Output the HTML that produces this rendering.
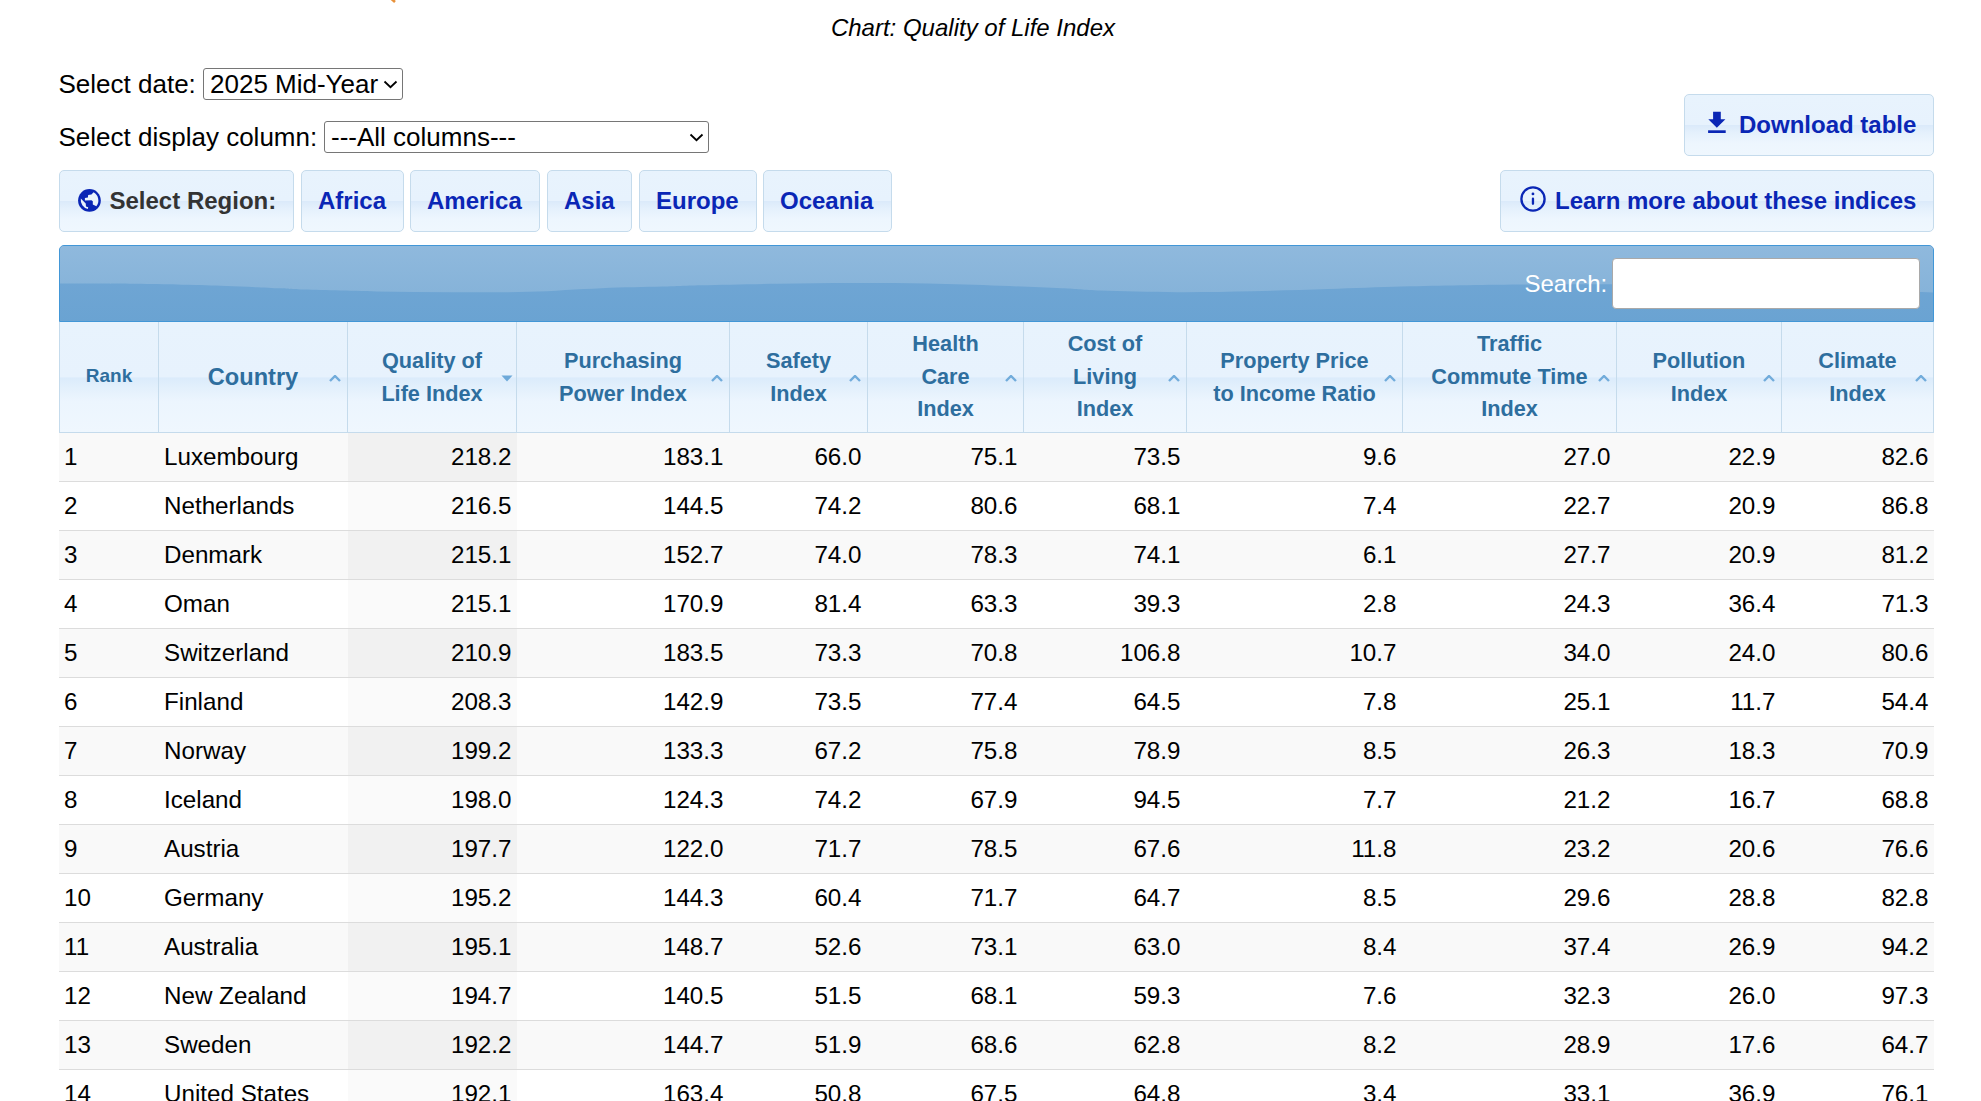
<!DOCTYPE html>
<html><head><meta charset="utf-8"><title>Quality of Life Index</title>
<style>
html,body{margin:0;padding:0;background:#fff;}
body{width:1981px;height:1101px;overflow:hidden;position:relative;font-family:"Liberation Sans",sans-serif;color:#000;}
.abs{position:absolute;white-space:nowrap;}
#title{left:0;width:1946px;top:10px;text-align:center;font-size:24px;font-style:italic;line-height:36px;}
.lbl{font-size:26px;line-height:32px;}
.sel{position:absolute;box-sizing:border-box;border:1px solid #767676;border-radius:3px;background:#fff;font-size:26px;line-height:30px;padding-left:6px;white-space:nowrap;}
.sel svg{position:absolute;top:11px;}
.glass{background:linear-gradient(to bottom,#e8f3fd 0%,#e7f2fd 49.5%,#dbeafa 50.5%,#e4f0fc 62%,#edf6fe 80%,#eff7fe 100%);}
.btn{position:absolute;box-sizing:border-box;border:1px solid #c5dbec;border-radius:5px;height:61.5px;font-weight:bold;font-size:24px;color:#0a26b5;line-height:59px;white-space:nowrap;}
.btn .t{position:absolute;top:0;}
#bar{position:absolute;left:59px;top:245px;width:1875px;height:77px;box-sizing:border-box;border:1px solid #4297d7;border-bottom:1px solid #4297d7;border-radius:5px 5px 0 0;overflow:hidden;background:#76aad6;}
#bar svg.wave{position:absolute;left:0;top:0;}
#search{position:absolute;left:1464.5px;top:23px;color:#fff;font-size:24px;line-height:30px;}
#sinput{position:absolute;left:1551.8px;top:12px;width:308px;height:50.5px;box-sizing:border-box;background:#fff;border:1px solid #a9a9a9;border-radius:4px;}
.th{position:absolute;top:322px;height:111px;box-sizing:border-box;border-left:1px solid #c5dbec;border-bottom:1px solid #c5dbec;font-weight:bold;color:#2e6e9e;font-size:21.7px;line-height:32.5px;text-align:center;background:linear-gradient(to bottom,#e8f3fd 0%,#e7f2fd 50%,#dbebfb 50.8%,#e3f0fc 60%,#ecf5fe 72%,#eff7fe 100%);}
.th:last-child{border-right:1px solid #c5dbec;}
.th .tt{position:absolute;left:0;right:0;top:50%;transform:translateY(-50%);}
.th.rank .tt{font-size:19px;margin-top:-1px;}
.th.country .tt{font-size:23.6px;}
.th .si{position:absolute;right:6px;top:53.3px;}
.tr{position:absolute;left:59px;width:1875px;height:49px;border-bottom:1px solid #dcdcdc;box-sizing:border-box;font-size:24.2px;}
.tr.odd{background:#f9f9f9;}
.tr.even{background:#fff;}
.td{position:absolute;top:0;height:48px;line-height:47px;white-space:nowrap;box-sizing:border-box;padding-left:6px;}
.td.rk{padding-left:5px;}
.td.num{text-align:right;padding-right:5.5px;padding-left:0;}
.tr.odd .td.sort{background:#f1f1f1;}
.tr.even .td.sort{background:#fafafa;}

</style></head><body>
<div class="abs" style="left:388px;top:0px;width:10px;height:5px;"><svg style="display:block" width="10" height="5"><path d="M3 -1.5 L7 2" stroke="#e8913a" stroke-width="2.6"/></svg></div>
<div id="title" class="abs">Chart: Quality of Life Index</div>
<div class="abs lbl" style="left:58.5px;top:68px;">Select date:</div>
<div class="sel" style="left:203px;top:68px;width:200px;height:31.5px;">2025 Mid-Year<svg style="left:179px" width="15" height="9" viewBox="0 0 15 9"><path d="M1.5 1.5 L7.5 7.2 L13.5 1.5" fill="none" stroke="#000" stroke-width="1.8"/></svg></div>
<div class="abs lbl" style="left:58.5px;top:121px;">Select display column:</div>
<div class="sel" style="left:324px;top:121px;width:385px;height:31.5px;">---All columns---<svg style="left:364px" width="15" height="9" viewBox="0 0 15 9"><path d="M1.5 1.5 L7.5 7.2 L13.5 1.5" fill="none" stroke="#000" stroke-width="1.8"/></svg></div>

<div class="btn glass" style="left:1684px;top:94px;width:250px;">
 <svg style="position:absolute;left:15px;top:10px" width="35" height="35" viewBox="0 0 35 35"><path d="M13.1 6.7 H20.8 V14.3 H25.4 L16.85 22.7 L8.3 14.3 H13.1 Z" fill="#0a26b5"/><rect x="8.1" y="25.3" width="17.6" height="2.7" fill="#0a26b5"/></svg>
 <span class="t" style="left:54px">Download table</span></div>

<div class="btn glass" style="left:59px;top:170px;width:235px;color:#333;">
 <svg style="position:absolute;left:14px;top:14px" width="30" height="30" viewBox="0 0 1101 1101"><circle cx="567" cy="567" r="417" fill="#0a26b5"/><path d="M720 270 L640 350 L520 370 L510 460 L400 480 L400 570 L640 560 L690 600 L690 720 L820 780 A342 342 0 0 0 720 270 Z M250 500 L430 680 L440 790 L520 820 L510 880 A342 342 0 0 1 250 500 Z" fill="#e9f3fc"/></svg>
 <span class="t" style="left:49.5px">Select Region:</span></div>
<div class="btn glass" style="left:301px;top:170px;width:103px;"><span class="t" style="left:16px">Africa</span></div>
<div class="btn glass" style="left:410px;top:170px;width:130px;"><span class="t" style="left:16px">America</span></div>
<div class="btn glass" style="left:547px;top:170px;width:85px;"><span class="t" style="left:16px">Asia</span></div>
<div class="btn glass" style="left:639px;top:170px;width:118px;"><span class="t" style="left:16px">Europe</span></div>
<div class="btn glass" style="left:763px;top:170px;width:129px;"><span class="t" style="left:16px">Oceania</span></div>

<div class="btn glass" style="left:1500px;top:170px;width:434px;">
 <svg style="position:absolute;left:14px;top:11px" width="35" height="35" viewBox="0 0 35 35"><circle cx="18" cy="17" r="11.6" fill="none" stroke="#0a26b5" stroke-width="2.3"/><circle cx="17.96" cy="11.9" r="1.4" fill="#0a26b5"/><path d="M17.96 16.7 V21.8" stroke="#0a26b5" stroke-width="2.3" stroke-linecap="round"/></svg>
 <span class="t" style="left:54px">Learn more about these indices</span></div>

<div id="bar">
 <svg class="wave" width="1875" height="77" viewBox="0 0 1875 77" preserveAspectRatio="none">
  <defs>
   <linearGradient id="gt" x1="0" y1="0" x2="0" y2="1"><stop offset="0" stop-color="#8fb9dd"/><stop offset="1" stop-color="#86b3d9"/></linearGradient>
   <linearGradient id="gb" x1="0" y1="0" x2="0" y2="1"><stop offset="0" stop-color="#73a7d5"/><stop offset="1" stop-color="#6aa3d2"/></linearGradient>
  </defs>
  <rect x="0" y="0" width="1875" height="77" fill="url(#gb)"/>
  <path id="wv" d="M0 0 H1875 V46.50 C1852.7 45.83 1780.0 43.67 1741.0 42.50 C1702.0 41.33 1674.3 40.20 1641.0 39.50 C1607.7 38.80 1571.0 38.47 1541.0 38.30 C1511.0 38.13 1484.5 38.33 1461.0 38.50 C1437.5 38.67 1420.0 38.95 1400.0 39.30 C1380.0 39.65 1363.0 39.97 1341.0 40.60 C1319.0 41.23 1292.8 42.32 1268.0 43.10 C1243.2 43.88 1217.2 44.78 1192.0 45.30 C1166.8 45.82 1142.2 46.32 1117.0 46.20 C1091.8 46.08 1060.2 45.25 1041.0 44.60 C1021.8 43.95 1018.7 43.10 1002.0 42.30 C985.3 41.50 963.3 40.58 941.0 39.80 C918.7 39.02 892.8 38.05 868.0 37.60 C843.2 37.15 817.2 37.07 792.0 37.10 C766.8 37.13 742.2 37.43 717.0 37.80 C691.8 38.17 660.2 38.83 641.0 39.30 C621.8 39.77 618.7 40.12 602.0 40.60 C585.3 41.08 563.3 41.33 541.0 42.20 C518.7 43.07 492.7 45.13 468.0 45.80 C443.3 46.47 418.2 46.27 393.0 46.20 C367.8 46.13 342.3 45.85 317.0 45.40 C291.7 44.95 257.2 44.02 241.0 43.50 C224.8 42.98 232.3 42.87 220.0 42.30 C207.7 41.73 183.3 40.68 167.0 40.10 C150.7 39.52 143.0 39.22 122.0 38.80 C101.0 38.38 61.3 37.82 41.0 37.60 C20.7 37.38 6.8 37.52 0.0 37.50 V0 Z" fill="url(#gt)"/>
 </svg>
 <div id="search">Search:</div>
 <div id="sinput"></div>
</div>

<div id="thead"><div class="th rank" style="left:59.0px;width:99.0px"><div class="tt">Rank</div></div><div class="th country" style="left:158.0px;width:189.0px"><div class="tt">Country</div><svg class="si" width="12" height="7" viewBox="0 0 12 7"><path d="M1 6 L6 1 L11 6" fill="none" stroke="#72acdb" stroke-width="2.4"/></svg></div><div class="th" style="left:347.0px;width:169.0px"><div class="tt">Quality of<br>Life Index</div><svg class="si" style="right:3.5px" width="12" height="7" viewBox="0 0 12 7"><path d="M0.5 0.5 L11.5 0.5 L6 6.5 Z" fill="#6ea9d9"/></svg></div><div class="th" style="left:516.0px;width:213.0px"><div class="tt">Purchasing<br>Power Index</div><svg class="si" width="12" height="7" viewBox="0 0 12 7"><path d="M1 6 L6 1 L11 6" fill="none" stroke="#72acdb" stroke-width="2.4"/></svg></div><div class="th" style="left:729.0px;width:138.0px"><div class="tt">Safety<br>Index</div><svg class="si" width="12" height="7" viewBox="0 0 12 7"><path d="M1 6 L6 1 L11 6" fill="none" stroke="#72acdb" stroke-width="2.4"/></svg></div><div class="th" style="left:867.0px;width:156.0px"><div class="tt">Health<br>Care<br>Index</div><svg class="si" width="12" height="7" viewBox="0 0 12 7"><path d="M1 6 L6 1 L11 6" fill="none" stroke="#72acdb" stroke-width="2.4"/></svg></div><div class="th" style="left:1023.0px;width:163.0px"><div class="tt">Cost of<br>Living<br>Index</div><svg class="si" width="12" height="7" viewBox="0 0 12 7"><path d="M1 6 L6 1 L11 6" fill="none" stroke="#72acdb" stroke-width="2.4"/></svg></div><div class="th" style="left:1186.0px;width:216.0px"><div class="tt">Property Price<br>to Income Ratio</div><svg class="si" width="12" height="7" viewBox="0 0 12 7"><path d="M1 6 L6 1 L11 6" fill="none" stroke="#72acdb" stroke-width="2.4"/></svg></div><div class="th" style="left:1402.0px;width:214.0px"><div class="tt">Traffic<br>Commute Time<br>Index</div><svg class="si" width="12" height="7" viewBox="0 0 12 7"><path d="M1 6 L6 1 L11 6" fill="none" stroke="#72acdb" stroke-width="2.4"/></svg></div><div class="th" style="left:1616.0px;width:165.0px"><div class="tt">Pollution<br>Index</div><svg class="si" width="12" height="7" viewBox="0 0 12 7"><path d="M1 6 L6 1 L11 6" fill="none" stroke="#72acdb" stroke-width="2.4"/></svg></div><div class="th" style="left:1781.0px;width:153.0px"><div class="tt">Climate<br>Index</div><svg class="si" width="12" height="7" viewBox="0 0 12 7"><path d="M1 6 L6 1 L11 6" fill="none" stroke="#72acdb" stroke-width="2.4"/></svg></div></div>
<div id="tbody"><div class="tr odd" style="top:433.00px"><div class="td rk" style="left:0.0px;width:99.0px">1</div><div class="td" style="left:99.0px;width:189.0px">Luxembourg</div><div class="td num sort" style="left:289.0px;width:169.0px">218.2</div><div class="td num" style="left:457.0px;width:213.0px">183.1</div><div class="td num" style="left:670.0px;width:138.0px">66.0</div><div class="td num" style="left:808.0px;width:156.0px">75.1</div><div class="td num" style="left:964.0px;width:163.0px">73.5</div><div class="td num" style="left:1127.0px;width:216.0px">9.6</div><div class="td num" style="left:1343.0px;width:214.0px">27.0</div><div class="td num" style="left:1557.0px;width:165.0px">22.9</div><div class="td num" style="left:1722.0px;width:153.0px">82.6</div></div><div class="tr even" style="top:482.00px"><div class="td rk" style="left:0.0px;width:99.0px">2</div><div class="td" style="left:99.0px;width:189.0px">Netherlands</div><div class="td num sort" style="left:289.0px;width:169.0px">216.5</div><div class="td num" style="left:457.0px;width:213.0px">144.5</div><div class="td num" style="left:670.0px;width:138.0px">74.2</div><div class="td num" style="left:808.0px;width:156.0px">80.6</div><div class="td num" style="left:964.0px;width:163.0px">68.1</div><div class="td num" style="left:1127.0px;width:216.0px">7.4</div><div class="td num" style="left:1343.0px;width:214.0px">22.7</div><div class="td num" style="left:1557.0px;width:165.0px">20.9</div><div class="td num" style="left:1722.0px;width:153.0px">86.8</div></div><div class="tr odd" style="top:531.00px"><div class="td rk" style="left:0.0px;width:99.0px">3</div><div class="td" style="left:99.0px;width:189.0px">Denmark</div><div class="td num sort" style="left:289.0px;width:169.0px">215.1</div><div class="td num" style="left:457.0px;width:213.0px">152.7</div><div class="td num" style="left:670.0px;width:138.0px">74.0</div><div class="td num" style="left:808.0px;width:156.0px">78.3</div><div class="td num" style="left:964.0px;width:163.0px">74.1</div><div class="td num" style="left:1127.0px;width:216.0px">6.1</div><div class="td num" style="left:1343.0px;width:214.0px">27.7</div><div class="td num" style="left:1557.0px;width:165.0px">20.9</div><div class="td num" style="left:1722.0px;width:153.0px">81.2</div></div><div class="tr even" style="top:580.00px"><div class="td rk" style="left:0.0px;width:99.0px">4</div><div class="td" style="left:99.0px;width:189.0px">Oman</div><div class="td num sort" style="left:289.0px;width:169.0px">215.1</div><div class="td num" style="left:457.0px;width:213.0px">170.9</div><div class="td num" style="left:670.0px;width:138.0px">81.4</div><div class="td num" style="left:808.0px;width:156.0px">63.3</div><div class="td num" style="left:964.0px;width:163.0px">39.3</div><div class="td num" style="left:1127.0px;width:216.0px">2.8</div><div class="td num" style="left:1343.0px;width:214.0px">24.3</div><div class="td num" style="left:1557.0px;width:165.0px">36.4</div><div class="td num" style="left:1722.0px;width:153.0px">71.3</div></div><div class="tr odd" style="top:629.00px"><div class="td rk" style="left:0.0px;width:99.0px">5</div><div class="td" style="left:99.0px;width:189.0px">Switzerland</div><div class="td num sort" style="left:289.0px;width:169.0px">210.9</div><div class="td num" style="left:457.0px;width:213.0px">183.5</div><div class="td num" style="left:670.0px;width:138.0px">73.3</div><div class="td num" style="left:808.0px;width:156.0px">70.8</div><div class="td num" style="left:964.0px;width:163.0px">106.8</div><div class="td num" style="left:1127.0px;width:216.0px">10.7</div><div class="td num" style="left:1343.0px;width:214.0px">34.0</div><div class="td num" style="left:1557.0px;width:165.0px">24.0</div><div class="td num" style="left:1722.0px;width:153.0px">80.6</div></div><div class="tr even" style="top:678.00px"><div class="td rk" style="left:0.0px;width:99.0px">6</div><div class="td" style="left:99.0px;width:189.0px">Finland</div><div class="td num sort" style="left:289.0px;width:169.0px">208.3</div><div class="td num" style="left:457.0px;width:213.0px">142.9</div><div class="td num" style="left:670.0px;width:138.0px">73.5</div><div class="td num" style="left:808.0px;width:156.0px">77.4</div><div class="td num" style="left:964.0px;width:163.0px">64.5</div><div class="td num" style="left:1127.0px;width:216.0px">7.8</div><div class="td num" style="left:1343.0px;width:214.0px">25.1</div><div class="td num" style="left:1557.0px;width:165.0px">11.7</div><div class="td num" style="left:1722.0px;width:153.0px">54.4</div></div><div class="tr odd" style="top:727.00px"><div class="td rk" style="left:0.0px;width:99.0px">7</div><div class="td" style="left:99.0px;width:189.0px">Norway</div><div class="td num sort" style="left:289.0px;width:169.0px">199.2</div><div class="td num" style="left:457.0px;width:213.0px">133.3</div><div class="td num" style="left:670.0px;width:138.0px">67.2</div><div class="td num" style="left:808.0px;width:156.0px">75.8</div><div class="td num" style="left:964.0px;width:163.0px">78.9</div><div class="td num" style="left:1127.0px;width:216.0px">8.5</div><div class="td num" style="left:1343.0px;width:214.0px">26.3</div><div class="td num" style="left:1557.0px;width:165.0px">18.3</div><div class="td num" style="left:1722.0px;width:153.0px">70.9</div></div><div class="tr even" style="top:776.00px"><div class="td rk" style="left:0.0px;width:99.0px">8</div><div class="td" style="left:99.0px;width:189.0px">Iceland</div><div class="td num sort" style="left:289.0px;width:169.0px">198.0</div><div class="td num" style="left:457.0px;width:213.0px">124.3</div><div class="td num" style="left:670.0px;width:138.0px">74.2</div><div class="td num" style="left:808.0px;width:156.0px">67.9</div><div class="td num" style="left:964.0px;width:163.0px">94.5</div><div class="td num" style="left:1127.0px;width:216.0px">7.7</div><div class="td num" style="left:1343.0px;width:214.0px">21.2</div><div class="td num" style="left:1557.0px;width:165.0px">16.7</div><div class="td num" style="left:1722.0px;width:153.0px">68.8</div></div><div class="tr odd" style="top:825.00px"><div class="td rk" style="left:0.0px;width:99.0px">9</div><div class="td" style="left:99.0px;width:189.0px">Austria</div><div class="td num sort" style="left:289.0px;width:169.0px">197.7</div><div class="td num" style="left:457.0px;width:213.0px">122.0</div><div class="td num" style="left:670.0px;width:138.0px">71.7</div><div class="td num" style="left:808.0px;width:156.0px">78.5</div><div class="td num" style="left:964.0px;width:163.0px">67.6</div><div class="td num" style="left:1127.0px;width:216.0px">11.8</div><div class="td num" style="left:1343.0px;width:214.0px">23.2</div><div class="td num" style="left:1557.0px;width:165.0px">20.6</div><div class="td num" style="left:1722.0px;width:153.0px">76.6</div></div><div class="tr even" style="top:874.00px"><div class="td rk" style="left:0.0px;width:99.0px">10</div><div class="td" style="left:99.0px;width:189.0px">Germany</div><div class="td num sort" style="left:289.0px;width:169.0px">195.2</div><div class="td num" style="left:457.0px;width:213.0px">144.3</div><div class="td num" style="left:670.0px;width:138.0px">60.4</div><div class="td num" style="left:808.0px;width:156.0px">71.7</div><div class="td num" style="left:964.0px;width:163.0px">64.7</div><div class="td num" style="left:1127.0px;width:216.0px">8.5</div><div class="td num" style="left:1343.0px;width:214.0px">29.6</div><div class="td num" style="left:1557.0px;width:165.0px">28.8</div><div class="td num" style="left:1722.0px;width:153.0px">82.8</div></div><div class="tr odd" style="top:923.00px"><div class="td rk" style="left:0.0px;width:99.0px">11</div><div class="td" style="left:99.0px;width:189.0px">Australia</div><div class="td num sort" style="left:289.0px;width:169.0px">195.1</div><div class="td num" style="left:457.0px;width:213.0px">148.7</div><div class="td num" style="left:670.0px;width:138.0px">52.6</div><div class="td num" style="left:808.0px;width:156.0px">73.1</div><div class="td num" style="left:964.0px;width:163.0px">63.0</div><div class="td num" style="left:1127.0px;width:216.0px">8.4</div><div class="td num" style="left:1343.0px;width:214.0px">37.4</div><div class="td num" style="left:1557.0px;width:165.0px">26.9</div><div class="td num" style="left:1722.0px;width:153.0px">94.2</div></div><div class="tr even" style="top:972.00px"><div class="td rk" style="left:0.0px;width:99.0px">12</div><div class="td" style="left:99.0px;width:189.0px">New Zealand</div><div class="td num sort" style="left:289.0px;width:169.0px">194.7</div><div class="td num" style="left:457.0px;width:213.0px">140.5</div><div class="td num" style="left:670.0px;width:138.0px">51.5</div><div class="td num" style="left:808.0px;width:156.0px">68.1</div><div class="td num" style="left:964.0px;width:163.0px">59.3</div><div class="td num" style="left:1127.0px;width:216.0px">7.6</div><div class="td num" style="left:1343.0px;width:214.0px">32.3</div><div class="td num" style="left:1557.0px;width:165.0px">26.0</div><div class="td num" style="left:1722.0px;width:153.0px">97.3</div></div><div class="tr odd" style="top:1021.00px"><div class="td rk" style="left:0.0px;width:99.0px">13</div><div class="td" style="left:99.0px;width:189.0px">Sweden</div><div class="td num sort" style="left:289.0px;width:169.0px">192.2</div><div class="td num" style="left:457.0px;width:213.0px">144.7</div><div class="td num" style="left:670.0px;width:138.0px">51.9</div><div class="td num" style="left:808.0px;width:156.0px">68.6</div><div class="td num" style="left:964.0px;width:163.0px">62.8</div><div class="td num" style="left:1127.0px;width:216.0px">8.2</div><div class="td num" style="left:1343.0px;width:214.0px">28.9</div><div class="td num" style="left:1557.0px;width:165.0px">17.6</div><div class="td num" style="left:1722.0px;width:153.0px">64.7</div></div><div class="tr even" style="top:1070.00px"><div class="td rk" style="left:0.0px;width:99.0px">14</div><div class="td" style="left:99.0px;width:189.0px">United States</div><div class="td num sort" style="left:289.0px;width:169.0px">192.1</div><div class="td num" style="left:457.0px;width:213.0px">163.4</div><div class="td num" style="left:670.0px;width:138.0px">50.8</div><div class="td num" style="left:808.0px;width:156.0px">67.5</div><div class="td num" style="left:964.0px;width:163.0px">64.8</div><div class="td num" style="left:1127.0px;width:216.0px">3.4</div><div class="td num" style="left:1343.0px;width:214.0px">33.1</div><div class="td num" style="left:1557.0px;width:165.0px">36.9</div><div class="td num" style="left:1722.0px;width:153.0px">76.1</div></div></div>
</body></html>
